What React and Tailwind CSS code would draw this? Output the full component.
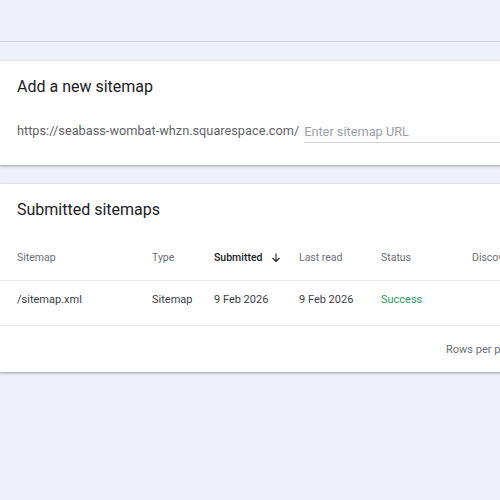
import React from 'react';

const font = { fontFamily: 'Roboto, "Liberation Sans", sans-serif' };

const cols = [
  { label: 'Sitemap', w: 'w-[135px]' },
  { label: 'Type', w: 'w-[62px]' },
  { label: 'Submitted', w: 'w-[85px]', active: true },
  { label: 'Last read', w: 'w-[82px]' },
  { label: 'Status', w: 'w-[91px]' },
  { label: 'Discovered pages', w: 'w-[120px]' },
];

const row = ['/sitemap.xml', 'Sitemap', '9 Feb 2026', '9 Feb 2026', 'Success', ''];

function ArrowDown() {
  return (
    <svg width="12" height="12" viewBox="0 0 24 24" className="ml-[8px] text-[#202124]">
      <path d="M12 3v16M5 12l7 7 7-7" fill="none" stroke="currentColor" strokeWidth="2.2" />
    </svg>
  );
}

export default function App() {
  return (
    <div className="w-[500px] h-[500px] overflow-hidden bg-[#eef2f8]" style={font}>
      <div className="h-[42px] border-b border-[#d3d7dd]" />

      <div className="w-[640px] mt-[19px]">
        {/* Add a new sitemap */}
        <div className="bg-white shadow-[0_1px_2px_rgba(60,64,67,0.35),0_1px_3px_1px_rgba(60,64,67,0.12)] pt-[14px] pb-[22px] pl-[17px]">
          <h2 className="text-[16px] leading-6 text-[#202124]">Add a new sitemap</h2>
          <div className="mt-[20px] flex items-end h-6">
            <span className="text-[12.75px] leading-6 text-[#5f6368] pr-[5px]">https://seabass-wombat-whzn.squarespace.com/</span>
            <div className="flex-1 border-b border-[#d0d3d7] h-6">
              <span className="text-[12.75px] leading-6 text-[#9aa0a6]">Enter sitemap URL</span>
            </div>
          </div>
        </div>

        {/* Submitted sitemaps */}
        <div className="mt-[19px] bg-white shadow-[0_1px_2px_rgba(60,64,67,0.35),0_1px_3px_1px_rgba(60,64,67,0.12)] pt-[14px]">
          <h2 className="pl-[17px] text-[16px] leading-6 text-[#202124]">Submitted sitemaps</h2>
          <div className="mt-[13px] h-[46px] flex items-center pl-[17px] border-b border-[#e8eaed]">
            {cols.map((c) => (
              <div key={c.label} className={`${c.w} shrink-0 flex items-center text-[10.5px] ${c.active ? 'font-medium text-[#202124]' : 'text-[#6b6f74]'}`}>
                {c.label}
                {c.active && <ArrowDown />}
              </div>
            ))}
          </div>
          <div className="h-[45px] pt-[11px] flex pl-[17px] border-b border-[#e8eaed]">
            {row.map((v, i) => (
              <div key={i} className={`${cols[i].w} shrink-0 text-[11px] leading-4 ${v === 'Success' ? 'text-[#2f9e5e]' : 'text-[#3c4043]'}`}>
                {v}
              </div>
            ))}
          </div>
          <div className="h-[46px] pt-[2px] flex items-center pl-[446px]">
            <span className="text-[11px] text-[#6b6f74]">Rows per page:</span>
          </div>
        </div>
      </div>
    </div>
  );
}
